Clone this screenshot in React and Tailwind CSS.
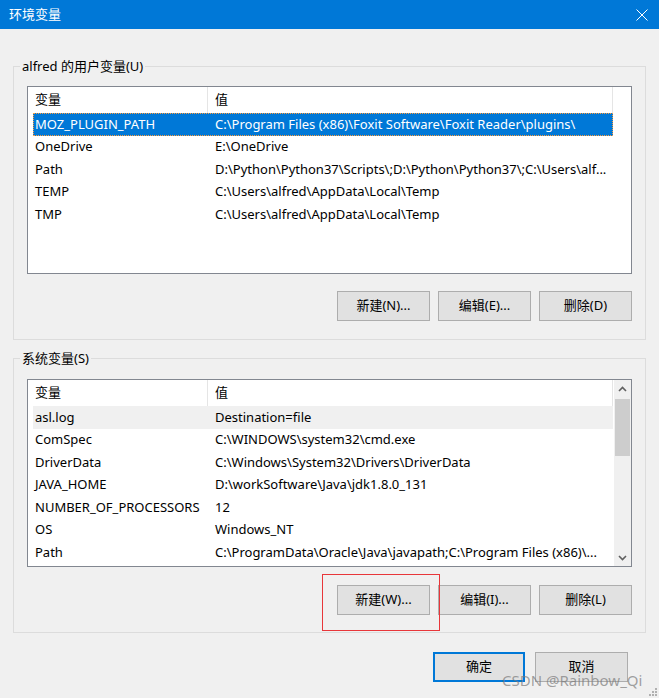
import React from 'react';

const userVars = [
  ['MOZ_PLUGIN_PATH', 'C:\\Program Files (x86)\\Foxit Software\\Foxit Reader\\plugins\\'],
  ['OneDrive', 'E:\\OneDrive'],
  ['Path', 'D:\\Python\\Python37\\Scripts\\;D:\\Python\\Python37\\;C:\\Users\\alf...'],
  ['TEMP', 'C:\\Users\\alfred\\AppData\\Local\\Temp'],
  ['TMP', 'C:\\Users\\alfred\\AppData\\Local\\Temp'],
];

const systemVars = [
  ['asl.log', 'Destination=file'],
  ['ComSpec', 'C:\\WINDOWS\\system32\\cmd.exe'],
  ['DriverData', 'C:\\Windows\\System32\\Drivers\\DriverData'],
  ['JAVA_HOME', 'D:\\workSoftware\\Java\\jdk1.8.0_131'],
  ['NUMBER_OF_PROCESSORS', '12'],
  ['OS', 'Windows_NT'],
  ['Path', 'C:\\ProgramData\\Oracle\\Java\\javapath;C:\\Program Files (x86)\\...'],
];

const Button = ({ children, primary }) => (
  <button
    className={
      primary
        ? 'w-[92px] h-[30px] bg-[#e1e1e1] border-2 border-[#0078d7] text-black'
        : 'w-[93px] h-[30px] bg-[#e1e1e1] border border-[#adadad] text-black'
    }
  >
    {children}
  </button>
);

const Row = ({ name, value, mode }) => {
  let cls = 'flex items-center w-[580px] h-[22.5px] text-black';
  if (mode === 'selected') cls = 'flex items-center w-[580px] h-[22.5px] bg-[#0078d7] text-white outline-1 outline-dotted outline-[#ff9d3c] -outline-offset-1';
  if (mode === 'muted') cls = 'flex items-center w-[580px] h-[22.5px] bg-[#f0f0f0] text-black';
  return (
    <div className={cls}>
      <div className="w-[175px] pl-[2px] whitespace-nowrap">{name}</div>
      <div className="w-[405px] pl-[7px] whitespace-nowrap">{value}</div>
    </div>
  );
};

const Header = () => (
  <div className="flex h-[26px] w-[580px] items-center">
    <div className="w-[175px] h-full pl-[2px] flex items-center border-r border-[#e5e5e5]">变量</div>
    <div className="w-[405px] h-full pl-[7px] flex items-center border-r border-[#e5e5e5]">值</div>
  </div>
);

const ScrollBar = () => (
  <div className="w-[17px] h-full bg-[#f0f0f0] flex flex-col">
    <div className="h-[17px] flex items-center justify-center">
      <svg width="9" height="6" viewBox="0 0 9 6">
        <path d="M1 5 L4.5 1.5 L8 5" stroke="#606060" strokeWidth="1.6" fill="none" />
      </svg>
    </div>
    <div className="mt-[2px] mx-px h-[57px] bg-[#cdcdcd]" />
    <div className="flex-1" />
    <div className="h-[17px] flex items-center justify-center">
      <svg width="9" height="6" viewBox="0 0 9 6">
        <path d="M1 1 L4.5 4.5 L8 1" stroke="#606060" strokeWidth="1.6" fill="none" />
      </svg>
    </div>
  </div>
);

const VarList = ({ items, scroll, first }) => (
  <div className="h-[188px] border border-[#828790] bg-white flex overflow-hidden">
    <div className="flex-1 pl-[5px] overflow-hidden">
      <Header />
      {items.map(([n, v], i) => (
        <Row key={n + i} name={n} value={v} mode={i === 0 ? first : undefined} />
      ))}
    </div>
    {scroll && <ScrollBar />}
  </div>
);

const Group = ({ title, className, children }) => (
  <fieldset className={`border border-[#dcdcdc] px-[13px] ${className}`}>
    <legend className="ml-[-7px] px-[2px] leading-[18px]">{title}</legend>
    {children}
  </fieldset>
);

export default function App() {
  return (
    <div
      className="relative w-[659px] h-[698px] bg-[#f0f0f0] overflow-hidden text-[13px] text-black"
      style={{ fontFamily: '"Noto Sans", "Noto Sans CJK SC", sans-serif' }}
    >
      {/* 标题栏 */}
      <div className="h-[29px] bg-[#0078d7] text-white flex items-center justify-between pl-[9px] pr-[11px]">
        <span>环境变量</span>
        <svg width="12" height="12" viewBox="0 0 12 12">
          <path d="M0.5 0.5 L11.5 11.5 M11.5 0.5 L0.5 11.5" stroke="#fff" strokeWidth="1" />
        </svg>
      </div>

      <div className="px-[13px]">
        <Group title="alfred 的用户变量(U)" className="mt-[28px] pt-[11px] pb-[18px]">
          <VarList items={userVars} first="selected" />
          <div className="flex justify-end gap-[8px] mt-[17px]">
            <Button>新建(N)...</Button>
            <Button>编辑(E)...</Button>
            <Button>删除(D)</Button>
          </div>
        </Group>

        <Group title="系统变量(S)" className="mt-[9px] pt-[12px] pb-[17px]">
          <VarList items={systemVars} first="muted" scroll />
          <div className="flex justify-end gap-[8px] mt-[18px]">
            <Button>新建(W)...</Button>
            <Button>编辑(I)...</Button>
            <Button>删除(L)</Button>
          </div>
        </Group>

        <div className="flex justify-end gap-[10px] mt-[19px] pr-[18px]">
          <Button primary>确定</Button>
          <Button>取消</Button>
        </div>
      </div>

      {/* 标注框 */}
      <div className="absolute left-[322px] top-[574px] w-[118px] h-[57px] border border-[#e8363a]" />

      {/* 水印 */}
      <div className="absolute left-[502px] top-[670px] leading-[20px] text-[15px] text-[#7a7a7a]/70 whitespace-nowrap">
        CSDN @Rainbow_Qi
      </div>

      {/* 调整大小手柄 */}
      <svg className="absolute right-[2px] bottom-[2px]" width="8" height="8" viewBox="0 0 8 8">
        <rect x="6" y="0" width="2" height="2" fill="#b0b0b0" />
        <rect x="3" y="3" width="2" height="2" fill="#b0b0b0" />
        <rect x="6" y="3" width="2" height="2" fill="#b0b0b0" />
        <rect x="0" y="6" width="2" height="2" fill="#b0b0b0" />
        <rect x="3" y="6" width="2" height="2" fill="#b0b0b0" />
        <rect x="6" y="6" width="2" height="2" fill="#b0b0b0" />
      </svg>
    </div>
  );
}
